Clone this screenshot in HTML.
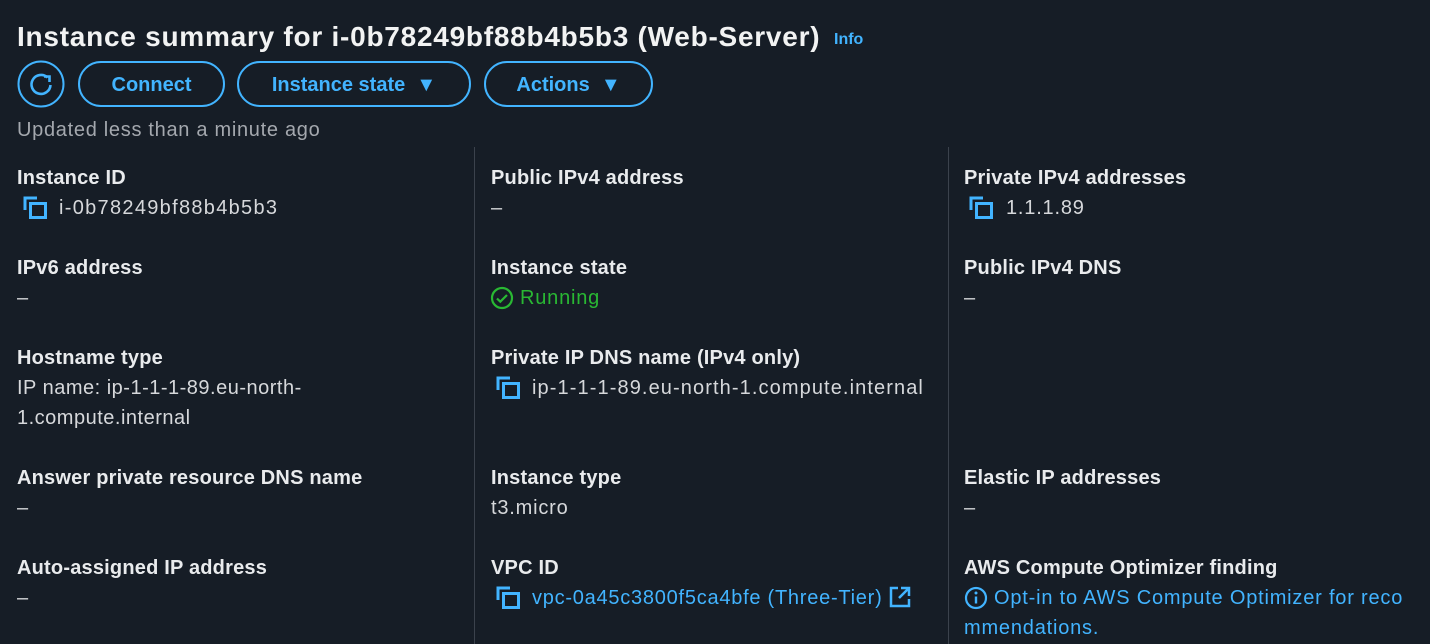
<!DOCTYPE html>
<html><head><meta charset="utf-8"><style>
html,body{margin:0;padding:0;background:#161d26;width:1430px;height:644px;overflow:hidden}
body{font-family:"Liberation Sans",sans-serif;color:#e6e8eb;position:relative}
.a{position:absolute;white-space:nowrap}
.t{font-size:28px;font-weight:bold;left:17px;top:21px;color:#f2f3f3;letter-spacing:0.75px}
.info{font-size:16px;font-weight:bold;color:#42b4ff;left:834px;top:31px}
.btn{position:absolute;top:61px;height:42px;border:2px solid #42b4ff;border-radius:24px;color:#42b4ff;font-weight:bold;font-size:20px;line-height:44px;text-align:center;box-sizing:content-box}
.upd{left:17px;top:119px;font-size:20px;color:#a4a8ae;letter-spacing:0.7px}
.l{font-size:20px;font-weight:bold;color:#e9ebed;letter-spacing:0.2px}
.v{font-size:20px;color:#d6d8db;letter-spacing:0.8px}
.blue{color:#42b4ff}
.div{position:absolute;top:147px;width:1px;height:497px;background:#3b424c}
svg{position:absolute}
</style></head><body>
<div class="a t">Instance summary for i-0b78249bf88b4b5b3 (Web-Server)</div>
<div class="a info">Info</div>
<svg style="left:17px;top:60px" width="48" height="48" viewBox="0 0 48 48"><circle cx="24" cy="24" r="22.5" fill="none" stroke="#42b4ff" stroke-width="2"/><path d="M30.5 17.5 A9.5 9.5 0 1 0 33.5 25" fill="none" stroke="#42b4ff" stroke-width="2.6"/><path d="M27 16.5 L32.5 16.5 L32.5 22" fill="none" stroke="#42b4ff" stroke-width="2.6"/></svg>
<div class="btn" style="left:78px;width:143px">Connect</div>
<div class="btn" style="left:237px;width:230px">Instance state &nbsp;▼</div>
<div class="btn" style="left:484px;width:165px">Actions &nbsp;▼</div>
<div class="a upd">Updated less than a minute ago</div>
<div class="div" style="left:474px"></div>
<div class="div" style="left:948px"></div>

<!-- col1 -->
<div class="a l" style="left:17px;top:167px">Instance ID</div>
<svg style="left:23px;top:196px" width="26" height="24" viewBox="0 0 26 24"><path d="M2 14V2H14" fill="none" stroke="#42b4ff" stroke-width="3"/><rect x="7.5" y="7.5" width="15" height="14" fill="none" stroke="#42b4ff" stroke-width="3"/></svg>
<div class="a v" style="left:59px;top:197px;letter-spacing:1.3px">i-0b78249bf88b4b5b3</div>
<div class="a l" style="left:17px;top:257px">IPv6 address</div>
<div class="a v" style="left:17px;top:287px">–</div>
<div class="a l" style="left:17px;top:347px">Hostname type</div>
<div class="a v" style="left:17px;top:373px;line-height:30px;letter-spacing:0.5px">IP name: ip-1-1-1-89.eu-north-<br>1.compute.internal</div>
<div class="a l" style="left:17px;top:467px">Answer private resource DNS name</div>
<div class="a v" style="left:17px;top:497px">–</div>
<div class="a l" style="left:17px;top:557px">Auto-assigned IP address</div>
<div class="a v" style="left:17px;top:587px">–</div>

<!-- col2 -->
<div class="a l" style="left:491px;top:167px">Public IPv4 address</div>
<div class="a v" style="left:491px;top:197px">–</div>
<div class="a l" style="left:491px;top:257px">Instance state</div>
<svg style="left:490px;top:286px" width="24" height="24" viewBox="0 0 24 24"><circle cx="12" cy="12" r="10" fill="none" stroke="#29b833" stroke-width="2.2"/><path d="M7 12.5l3.3 3.2L17 9" fill="none" stroke="#29b833" stroke-width="2.2"/></svg>
<div class="a v" style="left:520px;top:287px;color:#29b833">Running</div>
<div class="a l" style="left:491px;top:347px">Private IP DNS name (IPv4 only)</div>
<svg style="left:496px;top:376px" width="26" height="24" viewBox="0 0 26 24"><path d="M2 14V2H14" fill="none" stroke="#42b4ff" stroke-width="3"/><rect x="7.5" y="7.5" width="15" height="14" fill="none" stroke="#42b4ff" stroke-width="3"/></svg>
<div class="a v" style="left:532px;top:377px;letter-spacing:1.1px">ip-1-1-1-89.eu-north-1.compute.internal</div>
<div class="a l" style="left:491px;top:467px">Instance type</div>
<div class="a v" style="left:491px;top:497px">t3.micro</div>
<div class="a l" style="left:491px;top:557px">VPC ID</div>
<svg style="left:496px;top:586px" width="26" height="24" viewBox="0 0 26 24"><path d="M2 14V2H14" fill="none" stroke="#42b4ff" stroke-width="3"/><rect x="7.5" y="7.5" width="15" height="14" fill="none" stroke="#42b4ff" stroke-width="3"/></svg>
<div class="a v blue" style="left:532px;top:587px;letter-spacing:0.75px">vpc-0a45c3800f5ca4bfe (Three-Tier)</div>
<svg style="left:889px;top:586px" width="22" height="22" viewBox="0 0 22 22"><path d="M9 2H2V20H20V13" fill="none" stroke="#42b4ff" stroke-width="2.5"/><path d="M12 2H20V10M20 2L10 12" fill="none" stroke="#42b4ff" stroke-width="2.5"/></svg>

<!-- col3 -->
<div class="a l" style="left:964px;top:167px">Private IPv4 addresses</div>
<svg style="left:969px;top:196px" width="26" height="24" viewBox="0 0 26 24"><path d="M2 14V2H14" fill="none" stroke="#42b4ff" stroke-width="3"/><rect x="7.5" y="7.5" width="15" height="14" fill="none" stroke="#42b4ff" stroke-width="3"/></svg>
<div class="a v" style="left:1006px;top:197px">1.1.1.89</div>
<div class="a l" style="left:964px;top:257px">Public IPv4 DNS</div>
<div class="a v" style="left:964px;top:287px">–</div>
<div class="a l" style="left:964px;top:467px">Elastic IP addresses</div>
<div class="a v" style="left:964px;top:497px">–</div>
<div class="a l" style="left:964px;top:557px">AWS Compute Optimizer finding</div>
<svg style="left:964px;top:586px" width="24" height="24" viewBox="0 0 24 24"><circle cx="12" cy="12" r="10" fill="none" stroke="#42b4ff" stroke-width="2.2"/><path d="M12 10.5V17.5" stroke="#42b4ff" stroke-width="2.4"/><circle cx="12" cy="7" r="1.5" fill="#42b4ff"/></svg>
<div class="a v blue" style="left:994px;top:587px">Opt-in to AWS Compute Optimizer for reco</div>
<div class="a v blue" style="left:964px;top:617px">mmendations.</div>
</body></html>
